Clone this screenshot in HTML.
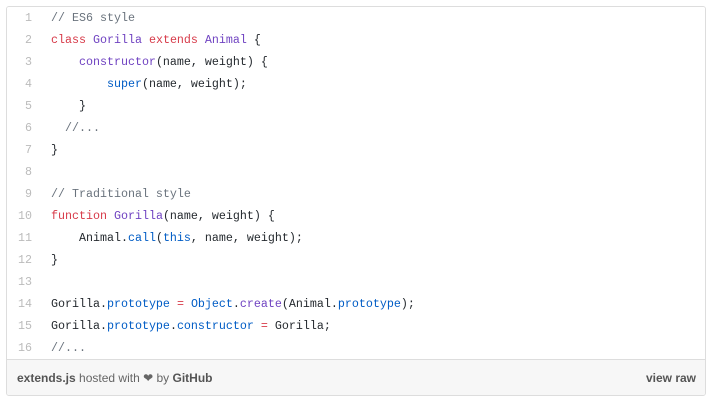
<!DOCTYPE html>
<html><head><style>
body{margin:0;background:#fff;width:714px;height:401px;overflow:hidden}
.g{position:absolute;left:6px;top:6px;width:698px;height:388px;border:1px solid #ddd;border-radius:3px;overflow:hidden}
.code{position:absolute;left:0;top:0;width:698px;height:352px;background:#fff}
.l{height:22px;line-height:22px;font-family:"Liberation Mono",monospace;font-size:11.67px;color:#24292e;white-space:pre;position:relative}
.n{position:absolute;left:0;width:25px;text-align:right;color:#bbb}
.c{position:absolute;left:44px}
.k{color:#d73a49}.e{color:#6f42c1}.b{color:#005cc5}.m{color:#6a737d}
.f{position:absolute;left:0;top:352px;width:698px;height:36px;background:#f7f7f7;border-top:1px solid #ddd;font-family:"Liberation Sans",sans-serif;font-size:12px;color:#666;line-height:36px}
.f b{color:#555}
</style></head><body>
<div class="g"><div class="code">
<div class="l"><span class="n">1</span><span class="c"><span class="m">// ES6 style</span></span></div>
<div class="l"><span class="n">2</span><span class="c"><span class="k">class</span> <span class="e">Gorilla</span> <span class="k">extends</span> <span class="e">Animal</span> {</span></div>
<div class="l"><span class="n">3</span><span class="c">    <span class="e">constructor</span>(name, weight) {</span></div>
<div class="l"><span class="n">4</span><span class="c">        <span class="b">super</span>(name, weight);</span></div>
<div class="l"><span class="n">5</span><span class="c">    }</span></div>
<div class="l"><span class="n">6</span><span class="c">  <span class="m">//...</span></span></div>
<div class="l"><span class="n">7</span><span class="c">}</span></div>
<div class="l"><span class="n">8</span><span class="c"></span></div>
<div class="l"><span class="n">9</span><span class="c"><span class="m">// Traditional style</span></span></div>
<div class="l"><span class="n">10</span><span class="c"><span class="k">function</span> <span class="e">Gorilla</span>(name, weight) {</span></div>
<div class="l"><span class="n">11</span><span class="c">    Animal.<span class="b">call</span>(<span class="b">this</span>, name, weight);</span></div>
<div class="l"><span class="n">12</span><span class="c">}</span></div>
<div class="l"><span class="n">13</span><span class="c"></span></div>
<div class="l"><span class="n">14</span><span class="c">Gorilla.<span class="b">prototype</span> <span class="k">=</span> <span class="b">Object</span>.<span class="e">create</span>(Animal.<span class="b">prototype</span>);</span></div>
<div class="l"><span class="n">15</span><span class="c">Gorilla.<span class="b">prototype</span>.<span class="b">constructor</span> <span class="k">=</span> Gorilla;</span></div>
<div class="l"><span class="n">16</span><span class="c"><span class="m">//...</span></span></div>
</div>
<div class="f"><span style="position:absolute;left:10px"><b>extends.js</b> hosted with ❤ by <b>GitHub</b></span><span style="position:absolute;right:9px"><b>view raw</b></span></div>
</div>
</body></html>
